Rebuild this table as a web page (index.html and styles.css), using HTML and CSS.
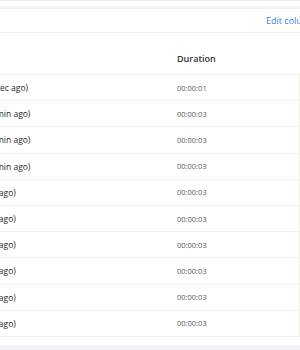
FILE: index.html
```html
<!DOCTYPE html>
<html lang="en">
<head>
<meta charset="utf-8">
<title>Runs</title>
<link rel="stylesheet" href="styles.css">
</head>
<body>
  <div class="card card-top"></div>
  <div class="card card-main">
    <div class="toolbar">
      <a class="link" href="#">Edit columns</a>
    </div>
    <div class="table-wrap">
      <div class="table">
        <div class="row head">
          <div class="cell c-start">Started</div>
          <div class="cell c-dur">Duration</div>
          <div class="cell c-fix">Actions</div>
        </div>
        <div class="row"><div class="cell c-start">2024-05-14 10:21:37 (1 sec ago)</div><div class="cell c-dur">00:00:01</div><div class="cell c-fix">View</div></div>
        <div class="row"><div class="cell c-start">2024-05-14 10:18:52 (3 min ago)</div><div class="cell c-dur">00:00:03</div><div class="cell c-fix">View</div></div>
        <div class="row"><div class="cell c-start">2024-05-14 10:18:21 (3 min ago)</div><div class="cell c-dur">00:00:03</div><div class="cell c-fix">View</div></div>
        <div class="row"><div class="cell c-start">2024-05-14 10:17:58 (3 min ago)</div><div class="cell c-dur">00:00:03</div><div class="cell c-fix">View</div></div>
        <div class="row"><div class="cell c-start">2024-05-14, 10:1 (4 min ago)</div><div class="cell c-dur">00:00:03</div><div class="cell c-fix">View</div></div>
        <div class="row"><div class="cell c-start">2024-05-14, 10:1 (4 min ago)</div><div class="cell c-dur">00:00:03</div><div class="cell c-fix">View</div></div>
        <div class="row"><div class="cell c-start">2024-05-14, 10:1 (5 min ago)</div><div class="cell c-dur">00:00:03</div><div class="cell c-fix">View</div></div>
        <div class="row"><div class="cell c-start">2024-05-14, 10:1 (5 min ago)</div><div class="cell c-dur">00:00:03</div><div class="cell c-fix">View</div></div>
        <div class="row"><div class="cell c-start">2024-05-14, 10:1 (6 min ago)</div><div class="cell c-dur">00:00:03</div><div class="cell c-fix">View</div></div>
        <div class="row"><div class="cell c-start">2024-05-14, 10:1 (6 min ago)</div><div class="cell c-dur">00:00:03</div><div class="cell c-fix">View</div></div>
      </div>
    </div>
  </div>
</body>
</html>
```

FILE: styles.css
```css
* { box-sizing: border-box; }
html, body { margin: 0; padding: 0; }
body {
  width: 300px;
  height: 350px;
  overflow: hidden;
  background: #f0f2f5;
  font-family: "Open Sans", "Noto Sans", sans-serif;
  color: #333;
}
.card { background: #fff; }
.card-top {
  height: 6px;
  border-top: 1px solid #eceef1;
}
.card-main {
  margin-top: 3px;
  height: 336px;
  width: 420px;
  display: flex;
  flex-direction: column;
}
.toolbar {
  height: 24px;
  border-bottom: 1px solid #f0f0f0;
  padding-left: 266px;
  display: flex;
  align-items: center;
}
.link {
  color: #3d7cf5;
  text-decoration: none;
  font-size: 9px;
  white-space: nowrap;
}
.table-wrap {
  padding-top: 10px;
  margin-left: -112px;
}
.table { display: flex; flex-direction: column; }
.row {
  display: grid;
  grid-template-columns: 281px 130px 120px;
  height: 26.2px;
  border-bottom: 1px solid #f0f0f0;
  align-items: center;
}
.row.head { height: 32px; }
.cell {
  padding-left: 8px;
  white-space: nowrap;
  overflow: hidden;
  font-size: 8.5px;
  height: 100%;
  display: flex;
  align-items: center;
}
.c-start { padding-left: 16px; color: #262626; }
.c-dur { color: #595959; font-size: 7.5px; }
.c-fix { border-left: 1px solid #f7f1d2; color: #3d7cf5; }
.head .cell { font-weight: 600; color: #333; font-size: 9px; }
.head .c-fix { border-left: 0; }
```
